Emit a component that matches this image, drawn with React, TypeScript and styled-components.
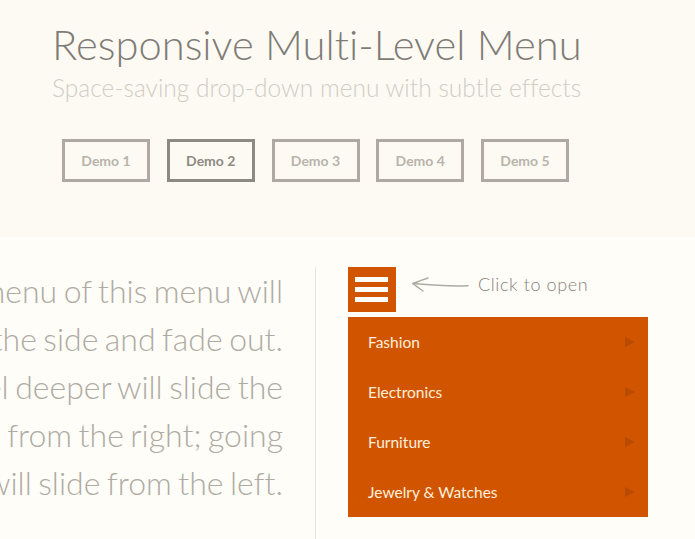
import { FC } from 'react';
import styled, { createGlobalStyle } from 'styled-components';

const GlobalStyle = createGlobalStyle`
    html, body {
        margin: 0;
        padding: 0;
        height: 100%;
        overflow: hidden;
        background: #fffdf8;
        font-family: Lato, "Liberation Sans", sans-serif;
        font-variant-ligatures: none;
    }
`;

const Header = styled.header`
    height: 237px;
    box-sizing: border-box;
    padding: 17px 0 0 52px;
    background: #fdfaf4;
`;
const Title = styled.h1`
    margin: 0;
    font-size: 41.7px;
    line-height: 54px;
    font-weight: 300;
    color: #7f7c76;
    white-space: nowrap;
`;
const Subtitle = styled.h2`
    margin: 0;
    font-size: 24.55px;
    line-height: 33px;
    font-weight: 300;
    color: #d0cdc5;
    white-space: nowrap;
`;
const DemoNav = styled.nav`
    display: flex;
    gap: 16.75px;
    margin: 35px 0 0 10px;
`;
const DemoLink = styled.a<{ $current?: boolean }>`
    width: 88px;
    height: 43px;
    box-sizing: border-box;
    display: flex;
    align-items: center;
    justify-content: center;
    border: 3px solid ${(p) => (p.$current ? '#8d8a82' : '#aeaaa1')};
    color: ${(p) => (p.$current ? '#8d8a82' : '#b8b4ab')};
    font-size: 14px;
    font-weight: 700;
`;
const Main = styled.main`
    display: flex;
    padding-top: 30px;
    height: 302px;
    box-sizing: border-box;
`;
const TextColumn = styled.div`
    width: 283px;
    flex: none;
    display: flex;
    flex-direction: column;
    align-items: flex-end;
`;
const TextLine = styled.div`
    font-size: 32px;
    word-spacing: -2.2px;
    line-height: 48px;
    font-weight: 300;
    color: #aeaba3;
    white-space: nowrap;
`;
const Divider = styled.div`
    width: 1px;
    flex: none;
    margin-left: 32px;
    background: #e9e6df;
`;
const MenuColumn = styled.div`
    margin-left: 32px;
    width: 300px;
    flex: none;
`;
const MenuTop = styled.div`
    display: flex;
    align-items: center;
    height: 45px;
`;
const Trigger = styled.button`
    width: 48px;
    height: 45px;
    flex: none;
    border: 0;
    padding: 10px 8px 10px 7px;
    background: #d15400;
    display: flex;
    flex-direction: column;
    justify-content: space-between;
`;
const TriggerBar = styled.span`
    display: block;
    height: 5px;
    background: #fffdf8;
`;
const Hint = styled.span`
    margin: 0 0 11px 9px;
    font-size: 18px;
    font-weight: 300;
    color: #85827c;
    letter-spacing: 0.6px;
    white-space: nowrap;
`;
const ArrowIcon = styled.svg`
    margin: 0 0 9px 16px;
    flex: none;
`;
const MenuList = styled.ul`
    list-style: none;
    margin: 5px 0 0;
    padding: 0;
    background: #d15400;
`;
const MenuItem = styled.li`
    height: 50px;
    display: flex;
    align-items: center;
    justify-content: space-between;
    padding: 0 12px 0 20px;
    font-size: 15.5px;
    color: #fff0dc;
`;
const ItemArrow = styled.svg`
    flex: none;
`;

const items = ['Fashion', 'Electronics', 'Furniture', 'Jewelry & Watches'];
const lines = [
    'The main menu of this menu will',
    'slide to the side and fade out.',
    'Going one level deeper will slide the',
    'submenu in from the right; going',
    'back will slide from the left.',
];
const demos = ['Demo 1', 'Demo 2', 'Demo 3', 'Demo 4', 'Demo 5'];

const App: FC = () => {
    return (
        <>
            <GlobalStyle />
            <Header>
                <Title>Responsive Multi-Level Menu</Title>
                <Subtitle>Space-saving drop-down menu with subtle effects</Subtitle>
                <DemoNav>
                    {demos.map((d, i) => (
                        <DemoLink key={d} $current={i === 1}>
                            {d}
                        </DemoLink>
                    ))}
                </DemoNav>
            </Header>
            <Main>
                <TextColumn>
                    {lines.map((l) => (
                        <TextLine key={l}>{l}</TextLine>
                    ))}
                </TextColumn>
                <Divider />
                <MenuColumn>
                    <MenuTop>
                        <Trigger aria-label="Open menu">
                            <TriggerBar />
                            <TriggerBar />
                            <TriggerBar />
                        </Trigger>
                        <ArrowIcon width="57" height="18" viewBox="0 0 57 18" fill="none" stroke="#aeaba4" strokeWidth="1.5" strokeLinecap="round">
                            <path d="M1 7.5C18 9 38 10.5 56 9.7" />
                            <path d="M1 7.5C6 5.5 11 3.5 16 2" />
                            <path d="M1 7.5C4 10 7.5 12.5 11 15" />
                        </ArrowIcon>
                        <Hint>Click to open</Hint>
                    </MenuTop>
                    <MenuList>
                        {items.map((item) => (
                            <MenuItem key={item}>
                                {item}
                                <ItemArrow width="12" height="12" viewBox="0 0 12 12">
                                    <path d="M1 1L11 6L1 11Z" fill="#b94b00" />
                                </ItemArrow>
                            </MenuItem>
                        ))}
                    </MenuList>
                </MenuColumn>
            </Main>
        </>
    );
};

export default App;
